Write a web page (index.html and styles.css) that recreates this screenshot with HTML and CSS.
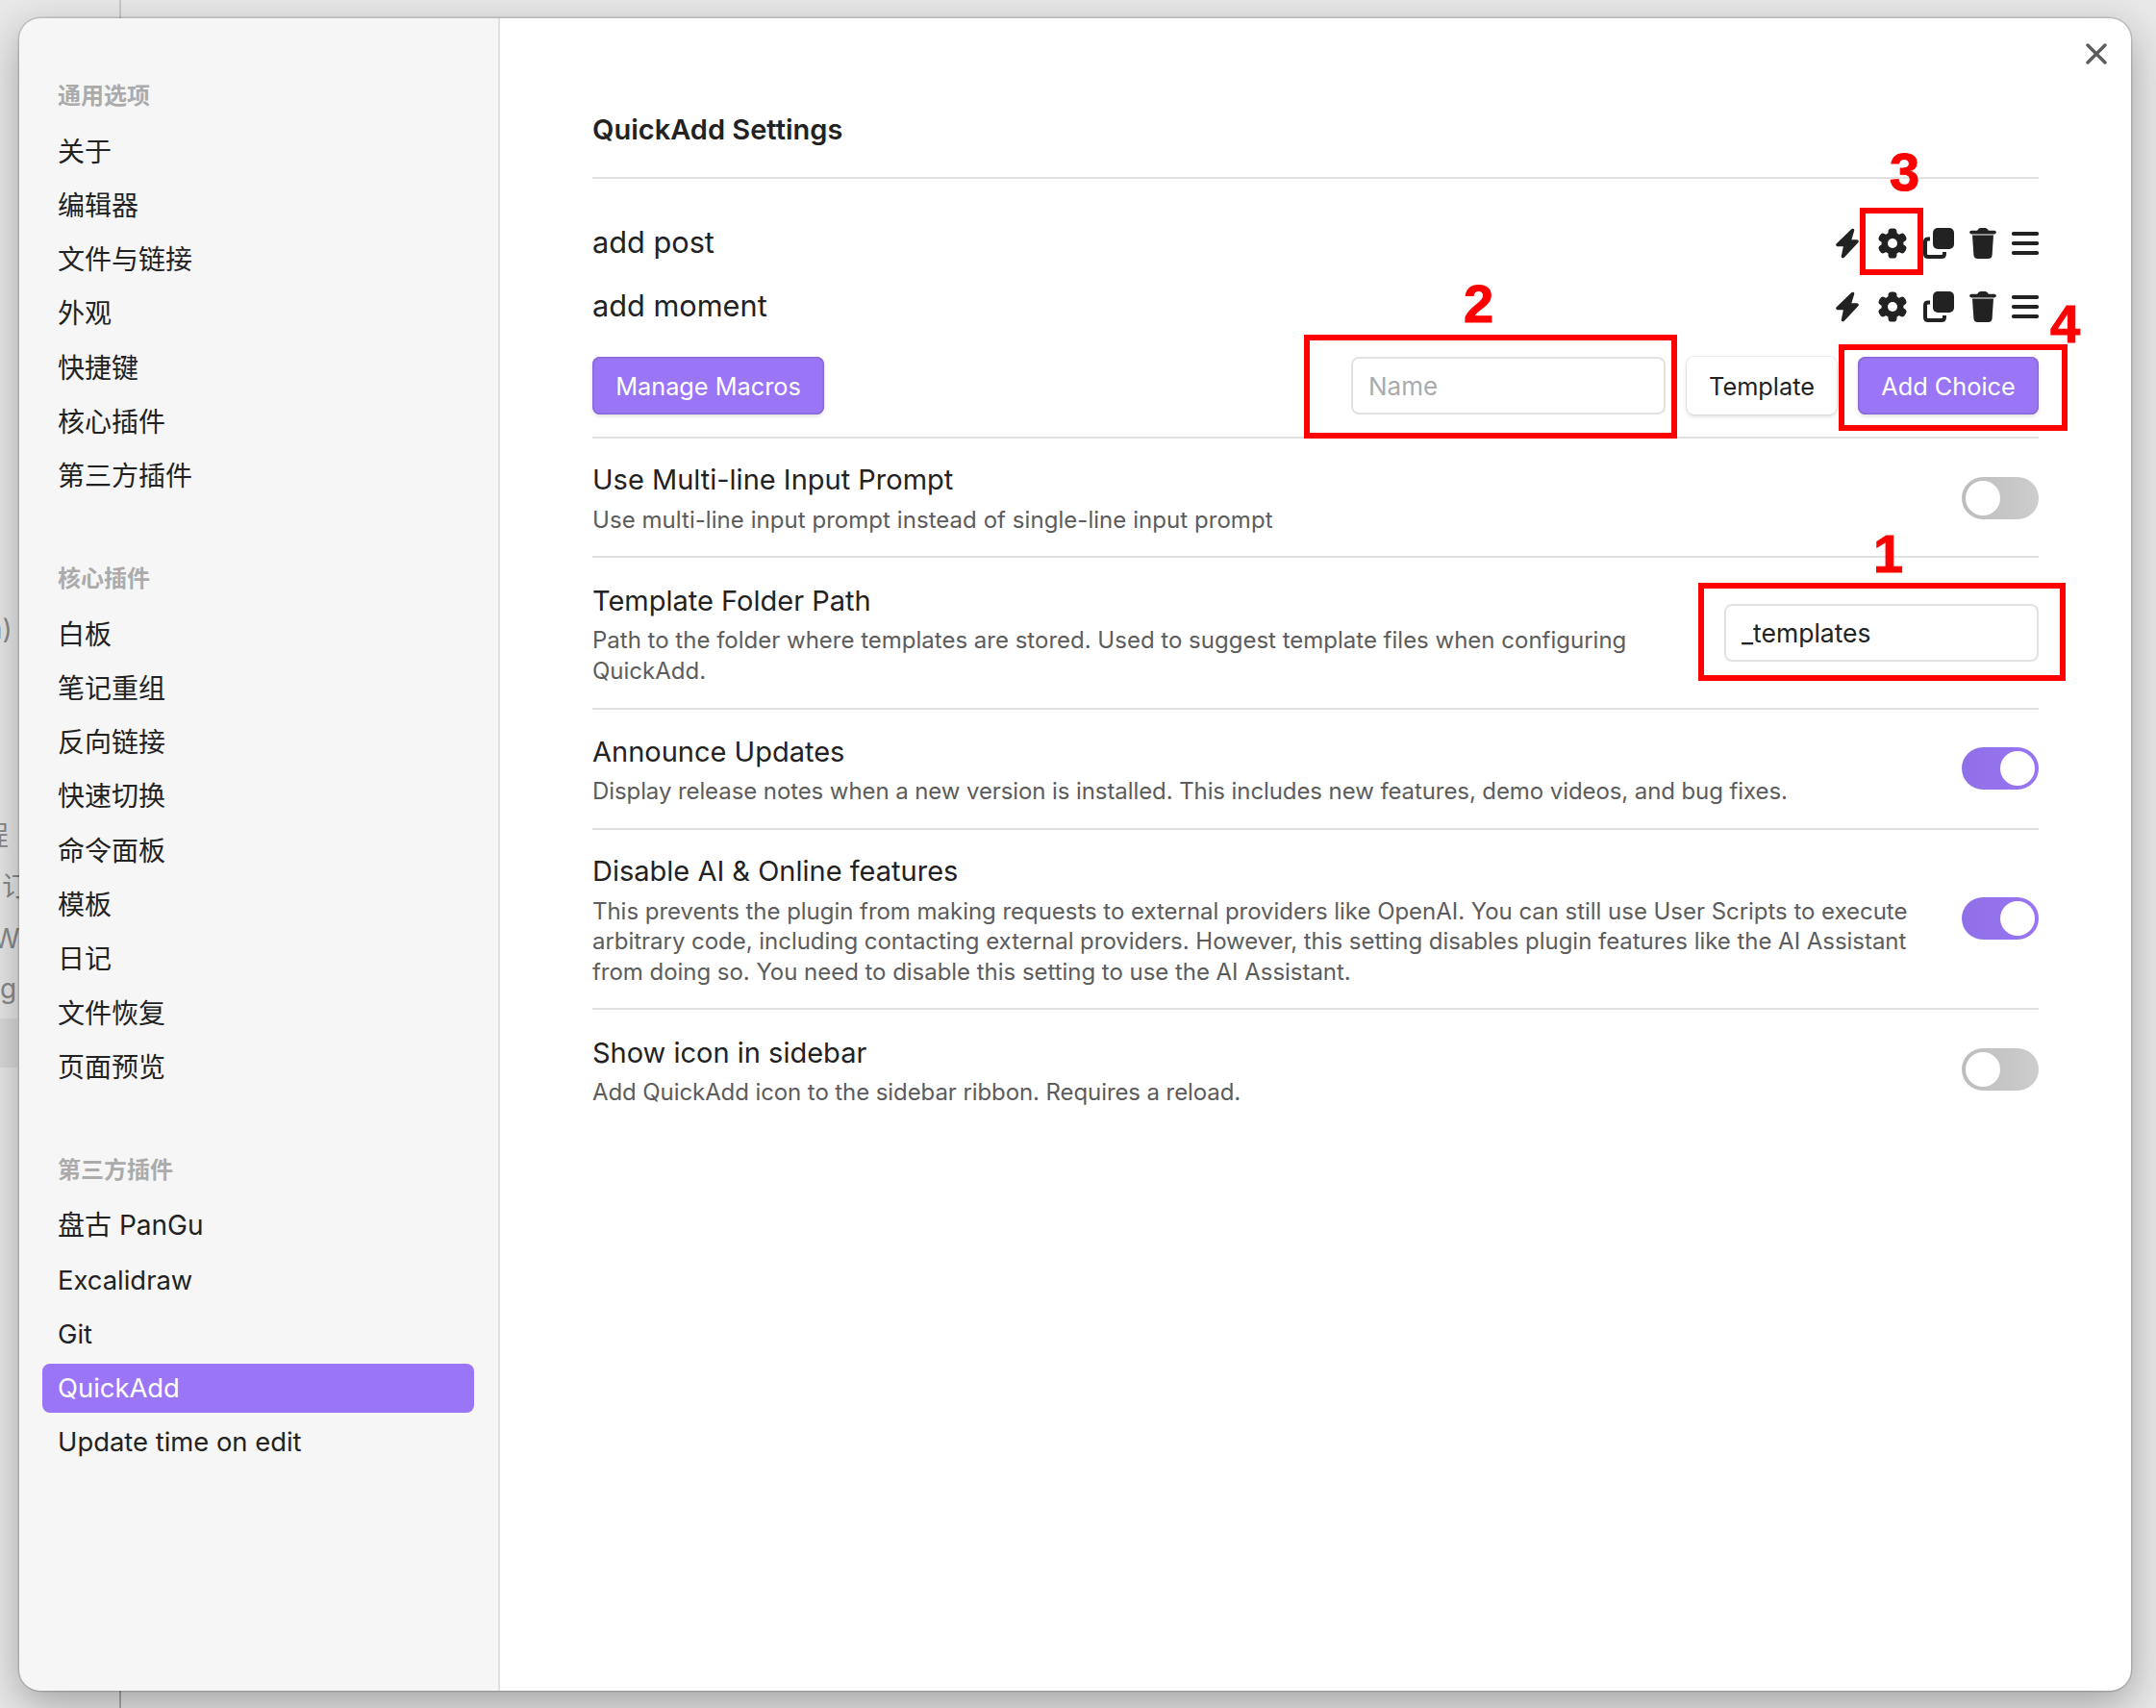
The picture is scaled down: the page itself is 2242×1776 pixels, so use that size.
FILE: index.html
```html
<!DOCTYPE html>
<html lang="zh">
<head>
<meta charset="utf-8">
<title>QuickAdd Settings</title>
<link rel="stylesheet" href="styles.css">
</head>
<body>
<div class="stage">
  <div class="backdrop">
    <span class="rule rule-top"></span>
    <span class="rule rule-bottom"></span>
    <span class="bg-text bg-a">n)</span>
    <span class="bg-text bg-b">程</span>
    <span class="bg-text bg-c">订</span>
    <span class="bg-text bg-d">W</span>
    <span class="bg-text bg-e">g</span>
    <span class="bg-block"></span>
  </div>

  <div class="modal">
    <nav class="sidebar">
      <div class="group-title">通用选项</div>
      <div class="nav-item">关于</div>
      <div class="nav-item">编辑器</div>
      <div class="nav-item">文件与链接</div>
      <div class="nav-item">外观</div>
      <div class="nav-item">快捷键</div>
      <div class="nav-item">核心插件</div>
      <div class="nav-item">第三方插件</div>
      <div class="group-title">核心插件</div>
      <div class="nav-item">白板</div>
      <div class="nav-item">笔记重组</div>
      <div class="nav-item">反向链接</div>
      <div class="nav-item">快速切换</div>
      <div class="nav-item">命令面板</div>
      <div class="nav-item">模板</div>
      <div class="nav-item">日记</div>
      <div class="nav-item">文件恢复</div>
      <div class="nav-item">页面预览</div>
      <div class="group-title">第三方插件</div>
      <div class="nav-item">盘古 PanGu</div>
      <div class="nav-item latin">Excalidraw</div>
      <div class="nav-item latin">Git</div>
      <div class="nav-item latin active">QuickAdd</div>
      <div class="nav-item latin">Update time on edit</div>
    </nav>

    <main class="content">
      <button class="close" aria-label="Close">
        <svg width="22" height="22" viewBox="0 0 22 22"><path d="M2 2 L20 20 M20 2 L2 20" stroke="#5c5c5c" stroke-width="3.4" stroke-linecap="round" fill="none"/></svg>
      </button>
      <h2 class="page-title">QuickAdd Settings</h2>

      <section class="choices">
        <div class="choice">
          <span class="choice-name">add post</span>
          <div class="choice-icons">
            <svg class="ic ic-bolt" viewBox="0 0 24 32"><path d="M17.5 2.500 L2 17.500 H10 L7.500 29.500 L22 14 H14 Z" fill="#222" stroke="#222" stroke-width="3.500" stroke-linejoin="round"/></svg>
            <svg class="ic ic-cog" viewBox="0 0 32 32"><g fill="#222"><circle cx="16" cy="16" r="11.4"/><rect x="11.5" y="0.5" width="9" height="31" rx="3.6"/><rect x="11.5" y="0.5" width="9" height="31" rx="3.6" transform="rotate(60 16 16)"/><rect x="11.5" y="0.5" width="9" height="31" rx="3.6" transform="rotate(120 16 16)"/></g><circle cx="16" cy="16" r="5" fill="#fff"/></svg>
            <svg class="ic ic-copy" viewBox="0 0 32 32"><rect x="10" y="0" width="22" height="22" rx="5" fill="#222"/><path d="M7 11.5 H5 Q2 11.5 2 14.5 V27 Q2 30 5 30 H19 Q22 30 22 27 V25" fill="none" stroke="#222" stroke-width="4"/></svg>
            <svg class="ic ic-trash" viewBox="0 0 28 32"><path d="M2 4.600 H26" stroke="#222" stroke-width="3.600" stroke-linecap="round"/><path d="M8 3.500 Q9 0 12 0 H16 Q19 0 20 3.500 Z" fill="#222"/><path d="M3 7.500 H25 L23.600 28 Q23.300 32 19.500 32 H8.500 Q4.700 32 4.400 28 Z" fill="#222"/></svg>
            <svg class="ic ic-menu" viewBox="0 0 28 32"><path d="M2 6 H26 M2 16 H26 M2 26 H26" stroke="#222" stroke-width="4.2" stroke-linecap="round"/></svg>
          </div>
        </div>
        <div class="choice">
          <span class="choice-name">add moment</span>
          <div class="choice-icons">
            <svg class="ic ic-bolt" viewBox="0 0 24 32"><path d="M17.5 2.500 L2 17.500 H10 L7.500 29.500 L22 14 H14 Z" fill="#222" stroke="#222" stroke-width="3.500" stroke-linejoin="round"/></svg>
            <svg class="ic ic-cog" viewBox="0 0 32 32"><g fill="#222"><circle cx="16" cy="16" r="11.4"/><rect x="11.5" y="0.5" width="9" height="31" rx="3.6"/><rect x="11.5" y="0.5" width="9" height="31" rx="3.6" transform="rotate(60 16 16)"/><rect x="11.5" y="0.5" width="9" height="31" rx="3.6" transform="rotate(120 16 16)"/></g><circle cx="16" cy="16" r="5" fill="#fff"/></svg>
            <svg class="ic ic-copy" viewBox="0 0 32 32"><rect x="10" y="0" width="22" height="22" rx="5" fill="#222"/><path d="M7 11.5 H5 Q2 11.5 2 14.5 V27 Q2 30 5 30 H19 Q22 30 22 27 V25" fill="none" stroke="#222" stroke-width="4"/></svg>
            <svg class="ic ic-trash" viewBox="0 0 28 32"><path d="M2 4.600 H26" stroke="#222" stroke-width="3.600" stroke-linecap="round"/><path d="M8 3.500 Q9 0 12 0 H16 Q19 0 20 3.500 Z" fill="#222"/><path d="M3 7.500 H25 L23.600 28 Q23.300 32 19.500 32 H8.500 Q4.700 32 4.400 28 Z" fill="#222"/></svg>
            <svg class="ic ic-menu" viewBox="0 0 28 32"><path d="M2 6 H26 M2 16 H26 M2 26 H26" stroke="#222" stroke-width="4.2" stroke-linecap="round"/></svg>
          </div>
        </div>
        <div class="actions">
          <button class="btn btn-accent btn-macros">Manage Macros</button>
          <div class="actions-right">
            <div class="input input-name placeholder">Name</div>
            <button class="btn btn-plain">Template</button>
            <button class="btn btn-accent btn-add">Add Choice</button>
          </div>
        </div>
      </section>

      <section class="setting setting-one">
        <div class="info">
          <div class="name">Use Multi-line Input Prompt</div>
          <div class="desc desc-wide">Use multi-line input prompt instead of single-line input prompt</div>
        </div>
        <span class="toggle"></span>
      </section>
      <section class="setting setting-two">
        <div class="info">
          <div class="name">Template Folder Path</div>
          <div class="desc">Path to the folder where templates are stored. Used to suggest template files when configuring QuickAdd.</div>
        </div>
        <div class="input input-path">_templates</div>
      </section>
      <section class="setting setting-four">
        <div class="info">
          <div class="name">Announce Updates</div>
          <div class="desc desc-tight">Display release notes when a new version is installed. This includes new features, demo videos, and bug fixes.</div>
        </div>
        <span class="toggle on"></span>
      </section>
      <section class="setting setting-three">
        <div class="info">
          <div class="name">Disable AI &amp; Online features</div>
          <div class="desc desc-slim">This prevents the plugin from making requests to external providers like OpenAI. You can still use User Scripts to execute arbitrary code, including contacting external providers. However, this setting disables plugin features like the AI Assistant from doing so. You need to disable this setting to use the AI Assistant.</div>
        </div>
        <span class="toggle on"></span>
      </section>
      <section class="setting setting-four last">
        <div class="info">
          <div class="name">Show icon in sidebar</div>
          <div class="desc desc-tight">Add QuickAdd icon to the sidebar ribbon. Requires a reload.</div>
        </div>
        <span class="toggle"></span>
      </section>
    </main>
  </div>

  <div class="mark box-1"></div>
  <div class="mark box-2"></div>
  <div class="mark box-3"></div>
  <div class="mark box-4"></div>
  <span class="num num-1">1</span>
  <span class="num num-2">2</span>
  <span class="num num-3">3</span>
  <span class="num num-4">4</span>
</div>
</body>
</html>
```

FILE: styles.css
```css
* { box-sizing: border-box; }
html, body { margin: 0; padding: 0; }
body {
  font-family: Inter, "Noto Sans CJK SC", sans-serif;
  color: #222;
  background: #e6e6e6;
}
.stage {
  position: relative;
  width: 2242px;
  height: 1776px;
  overflow: hidden;
  padding: 19px 26px 18px 20px;
  background: #e8e8e8;
}
.backdrop { position: absolute; inset: 0; }
.rule { position: absolute; left: 124px; width: 2px; background: #c8c8c8; }
.rule-top { top: 0; height: 20px; }
.rule-bottom { bottom: 0; height: 20px; background: #aaa; }
.bg-text { position: absolute; font-size: 28px; color: #8a8a8a; line-height: 36px; white-space: nowrap; }
.bg-a { left: -14px; top: 636px; }
.bg-b { left: -19px; top: 851px; }
.bg-c { left: 2px; top: 904px; }
.bg-d { left: -7px; top: 958px; }
.bg-e { left: 0; top: 1010px; }
.bg-block { position: absolute; left: 0; top: 1059px; width: 18px; height: 51px; background: rgba(0,0,0,.06); }

.modal {
  position: relative;
  display: flex;
  width: 2196px;
  height: 1739px;
  border-radius: 22px;
  background: #fff;
  overflow: hidden;
}
.stage::before {
  content: "";
  position: absolute;
  z-index: 1;
  left: 20px; top: 19px;
  width: 2196px; height: 1739px;
  border-radius: 22px;
  box-shadow: 0 0 0 1.5px rgba(0,0,0,.14), 0 14px 44px rgba(0,0,0,.3);
  pointer-events: none;
}

.sidebar {
  flex: none;
  width: 500px;
  height: 100%;
  padding: 61px 25px 0 24px;
  background: #f6f6f6;
  border-right: 2px solid #e0e0e0;
}
.group-title {
  height: 40px;
  line-height: 40px;
  margin-top: 60.5px;
  margin-bottom: 12.5px;
  padding-left: 16px;
  font-size: 24px;
  font-weight: 600;
  color: #ababab;
}
.group-title:first-child { margin-top: 0; }
.nav-item {
  height: 51.4px;
  line-height: 51.4px;
  margin-bottom: 4.9px;
  padding-left: 16px;
  font-size: 28px;
  border-radius: 8px;
  color: #222;
}
.nav-item.latin { font-size: 27.4px; }
.nav-item.active { background: #9a76f7; color: #fff; }

.content {
  position: relative;
  flex: 1;
  padding: 0 96px;
  min-width: 0;
}
.close {
  position: absolute;
  right: 25px;
  top: 26px;
  width: 22px;
  height: 22px;
  padding: 0;
  border: 0;
  background: none;
  display: flex;
}
.page-title {
  margin: 0;
  padding-top: 94px;
  height: 167px;
  line-height: 44px;
  font-size: 29px;
  font-weight: 600;
  border-bottom: 2px solid #e0e0e0;
}
.choices { padding-top: 34px; border-bottom: 2px solid #e0e0e0; height: 270px; }
.choice { display: flex; align-items: center; justify-content: space-between; height: 66px; }
.choice-name { font-size: 30.7px; margin-bottom: 3px; }
.choice-icons { display: flex; align-items: center; gap: 16px; }
.ic { display: block; height: 32px; }
.ic-bolt { width: 24px; margin-right: 3px; }
.ic-cog { width: 32px; }
.ic-copy { width: 32px; }
.ic-trash { width: 28px; }
.ic-menu { width: 28px; }
.actions { display: flex; justify-content: space-between; align-items: center; margin-top: 19px; height: 60px; }
.actions-right { display: flex; align-items: center; gap: 22px; }
.btn {
  height: 60px;
  padding: 0;
  font: 400 25.3px Inter, sans-serif;
  border-radius: 8px;
  border: 0;
  white-space: nowrap;
}
.btn-macros { width: 241px; }
.btn-add { width: 188px; }
.btn-accent {
  background: #9a76f7;
  color: #fff;
  box-shadow: inset 0 0 0 1.5px #8a68d8, 0 2px 4px rgba(0,0,0,.12);
}
.btn-plain {
  width: 156px;
  background: #fff;
  color: #222;
  box-shadow: 0 0 0 1px rgba(0,0,0,.06), 0 2px 5px rgba(0,0,0,.14);
}
.input {
  display: flex;
  align-items: center;
  height: 60px;
  padding: 0 16px;
  font-size: 26.5px;
  background: #fff;
  border: 2px solid #e2e2e2;
  border-radius: 8px;
}
.input-name { width: 327px; }
.placeholder { color: #ababab; font-size: 26px; }
.input-path { flex: none; width: 327px; }

.setting { display: flex; align-items: center; border-bottom: 2px solid #e0e0e0; }
.setting.last { border-bottom: 0; }
.setting-one { height: 124px; }
.setting-two { height: 158px; }
.setting-three { height: 187px; }
.setting-four { height: 125px; }
.setting-one .toggle { margin-top: 2px; }
.setting-three .toggle, .setting-four .toggle { margin-top: -1px; }
.info { flex: 1; min-width: 0; padding: 3.5px 50px 0 0; }
.name { font-size: 29px; line-height: 36px; margin-bottom: 7.5px; }
.desc { font-size: 24px; line-height: 31.5px; color: #5c5c5c; }
.desc-wide { letter-spacing: 0.05px; }
.desc-slim { letter-spacing: -0.035px; }
.desc-tight { letter-spacing: -0.09px; }
.toggle {
  position: relative;
  flex: none;
  width: 80px;
  height: 44px;
  border-radius: 22px;
  background: linear-gradient(90deg, #bdbdbd, #cdcdcd);
}
.toggle::after {
  content: "";
  position: absolute;
  left: 4px;
  top: 4px;
  width: 36px;
  height: 36px;
  border-radius: 50%;
  background: #fff;
}
.toggle.on { background: linear-gradient(90deg, #9070e8, #9875f2); }
.toggle.on::after { left: 40px; }

.mark { position: absolute; z-index: 2; border: 6px solid #ff0000; }
.box-1 { left: 1766px; top: 606px; width: 382px; height: 102px; }
.box-2 { left: 1356px; top: 348px; width: 388px; height: 108px; }
.box-3 { left: 1934px; top: 216px; width: 66px; height: 70px; }
.box-4 { left: 1912px; top: 358px; width: 238px; height: 90px; }
.num {
  position: absolute;
  z-index: 2;
  font: 700 56px/56px "Liberation Sans", sans-serif;
  color: #ff0000;
  -webkit-text-stroke: 1px #ff0000;
}
.num-1 { left: 1948px; top: 548px; }
.num-2 { left: 1522px; top: 288px; }
.num-3 { left: 1965px; top: 151px; }
.num-4 { left: 2132px; top: 309px; }
```
